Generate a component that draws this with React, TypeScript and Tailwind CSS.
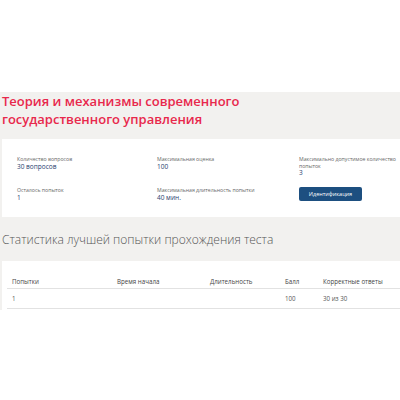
export default function App() {
  const headers = ["Попытки", "Время начала", "Длительность", "Балл", "Корректные ответы"];
  const row = ["1", "", "", "100", "30 из 30"];
  const cols = "grid grid-cols-[105px_93px_75px_38px_1fr]";

  return (
    <div className="w-[400px] h-[400px] bg-white font-['Open_Sans',sans-serif] overflow-hidden">
      <div className="h-[92px]" />
      <div className="bg-[#f2f1ef] pl-[2px] pt-[1px]">
        <h1 className="text-[13px] leading-[17.5px] font-semibold text-[#e8284c]">
          Теория и механизмы современного
          <br />
          государственного управления
        </h1>

        <div className="mt-[11px] bg-white h-[78px] pl-[15px] pt-[17px] grid grid-cols-[140px_142px_1fr] grid-rows-[31px_auto]">
          <Info label="Количество вопросов" value="30 вопросов" />
          <Info label="Максимальная оценка" value="100" />
          <Info label="Максимально допустимое количество попыток" value="3" />
          <Info label="Осталось попыток" value="1" />
          <Info label="Максимальная длительность попытки" value="40 мин." />
          <div className="leading-none">
            <button className="block h-[14px] w-[63px] rounded-[2px] bg-[#1d4f80] text-white text-[5.5px] leading-[14px]">
              Идентификация
            </button>
          </div>
        </div>

        <h2 className="mt-[14px] text-[12px] leading-[18px] font-light text-[#555]">
          Статистика лучшей попытки прохождения теста
        </h2>

        <div className="mt-[12px] bg-white pl-[5px] pt-[14px] pb-[1px]">
          <div className={`${cols} h-[14px] items-center border-b border-[#e2e2e2] text-[6.2px] text-[#444] pl-[5px]`}>
            {headers.map((h) => (
              <div key={h}>{h}</div>
            ))}
          </div>
          <div className={`${cols} h-[20px] items-center border-b border-[#e2e2e2] text-[6.2px] text-[#555] pl-[5px]`}>
            {row.map((c, i) => (
              <div key={i}>{c}</div>
            ))}
          </div>
        </div>
      </div>
    </div>
  );
}

function Info({ label, value }: { label: string; value: string }) {
  return (
    <div>
      <div className="text-[5.2px] leading-[6.5px] text-[#666]">{label}</div>
      <div className="text-[6.5px] leading-[7px] font-medium text-[#1f3e6e]">{value}</div>
    </div>
  );
}
